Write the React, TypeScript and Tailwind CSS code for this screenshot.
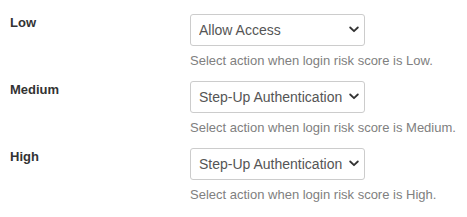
const rows = [
  { label: "Low", value: "Allow Access" },
  { label: "Medium", value: "Step-Up Authentication" },
  { label: "High", value: "Step-Up Authentication" },
];

const options = ["Allow Access", "Step-Up Authentication", "Block Access"];

export default function App() {
  return (
    <div className="w-[467px] h-[217px] overflow-hidden bg-white pl-[10px] pt-[14px] font-['Liberation_Sans',Arial,sans-serif]">
      {rows.map((row) => (
        <div key={row.label} className="flex mb-[10px]">
          <label className="w-[180px] shrink-0 text-[13px] leading-[18px] font-bold text-[#333]">{row.label}</label>
          <div className="flex flex-col">
            <div className="relative w-[175px]">
              <select
                defaultValue={row.value}
                className="appearance-none w-full h-[32px] rounded-[3px] border border-[#ccc] bg-white pl-[8px] pr-[22px] text-[14px] text-[#555] outline-none"
              >
                {options.map((o) => (
                  <option key={o} value={o}>
                    {o}
                  </option>
                ))}
              </select>
              <svg
                className="pointer-events-none absolute right-[6px] top-[12px]"
                width="10"
                height="7"
                viewBox="0 0 10 7"
                fill="none"
              >
                <path d="M1.2 1.5 L5 5.2 L8.8 1.5" stroke="#333" strokeWidth="1.8" strokeLinecap="round" strokeLinejoin="round" />
              </svg>
            </div>
            <p className="mt-[5px] text-[13px] leading-[20px] text-[#808080]">
              Select action when login risk score is {row.label}.
            </p>
          </div>
        </div>
      ))}
    </div>
  );
}
